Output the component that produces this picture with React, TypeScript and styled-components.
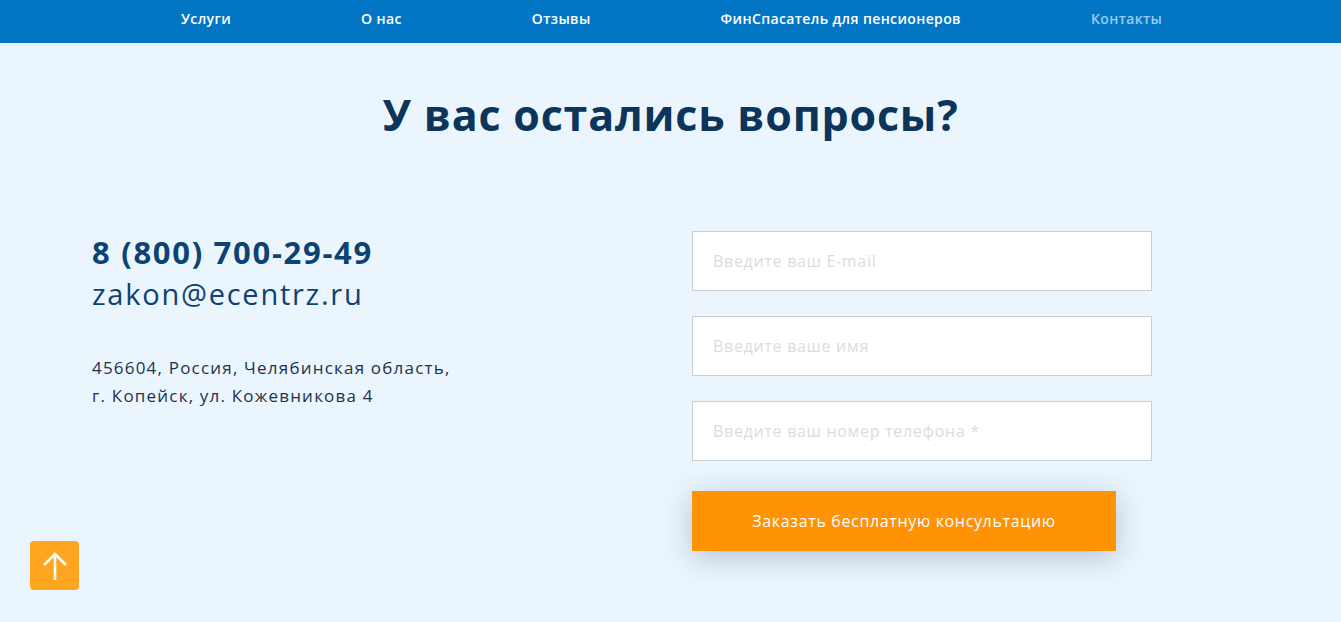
import React from "react";
import styled, { createGlobalStyle } from "styled-components";

const Global = createGlobalStyle`
  html, body { margin: 0; padding: 0; }
  body {
    background: #eaf5fe;
    font-family: "Open Sans", "Noto Sans", sans-serif;
    min-height: 622px;
  }
  * { box-sizing: border-box; }
`;

const Nav = styled.nav`
  height: 43px;
  background: #0276c5;
  display: flex;
  align-items: center;
  padding-left: 181px;
  gap: 130px;
`;

const NavLink = styled.a<{ $active?: boolean }>`
  font-size: 14px;
  font-weight: 600;
  color: ${(p) => (p.$active ? "#9ccbef" : "#ffffff")};
  text-decoration: none;
  margin-top: -7px;
  white-space: nowrap;
  letter-spacing: 0.38px;
`;

const Main = styled.main`
  padding-top: 42px;
`;

const Title = styled.h2`
  margin: 0;
  text-align: center;
  font-size: 43px;
  font-weight: 700;
  color: #0d3459;
  line-height: 60px;
  letter-spacing: 0.8px;
`;

const Columns = styled.section`
  width: 1157px;
  margin: 0 auto;
  padding-top: 86px;
  display: grid;
  grid-template-columns: 600px 460px;
`;

const Contacts = styled.div`
  display: flex;
  flex-direction: column;
  padding-top: 1px;
`;

const Phone = styled.a`
  font-size: 31px;
  font-weight: 700;
  color: #0c4373;
  text-decoration: none;
  line-height: 40px;
  letter-spacing: 1.7px;
`;

const Email = styled.a`
  font-size: 29px;
  font-weight: 400;
  color: #0c4373;
  text-decoration: none;
  line-height: 44px;
  letter-spacing: 1.75px;
`;

const Address = styled.p`
  margin: 38px 0 0;
  font-size: 17px;
  line-height: 28px;
  color: #1f3348;
  letter-spacing: 1.2px;
`;

const Form = styled.form`
  display: flex;
  flex-direction: column;
  gap: 25px;
`;

const Input = styled.input`
  width: 460px;
  height: 60px;
  border: 1px solid #c9ced3;
  background: #ffffff;
  padding: 0 20px;
  font-family: inherit;
  font-size: 16px;
  letter-spacing: 0.7px;
  outline: none;
  &::placeholder { color: #dcdcdc; }
`;

const Submit = styled.button`
  margin-top: 5px;
  width: 424px;
  height: 60px;
  border: none;
  background: #ff9205;
  color: #ffffff;
  font-family: inherit;
  font-size: 16px;
  font-weight: 500;
  letter-spacing: 0.65px;
  box-shadow: 0 6px 30px rgba(40, 70, 100, 0.28);
  cursor: pointer;
`;

const ScrollUp = styled.button`
  position: fixed;
  left: 30px;
  top: 541px;
  width: 49px;
  height: 49px;
  border: none;
  border-radius: 4px;
  background: #ffa51f;
  display: flex;
  align-items: center;
  justify-content: center;
  padding: 0;
`;

export default function App() {
  return (
    <>
      <Global />
      <Nav>
        <NavLink href="#">Услуги</NavLink>
        <NavLink href="#">О нас</NavLink>
        <NavLink href="#">Отзывы</NavLink>
        <NavLink href="#">ФинСпасатель для пенсионеров</NavLink>
        <NavLink href="#" $active>Контакты</NavLink>
      </Nav>
      <Main>
        <Title>У вас остались вопросы?</Title>
        <Columns>
          <Contacts>
            <Phone href="#">8 (800) 700-29-49</Phone>
            <Email href="#">zakon@ecentrz.ru</Email>
            <Address>
              456604, Россия, Челябинская область,
              <br />
              г. Копейск, ул. Кожевникова 4
            </Address>
          </Contacts>
          <Form onSubmit={(e) => e.preventDefault()}>
            <Input placeholder="Введите ваш E-mail" />
            <Input placeholder="Введите ваше имя" />
            <Input placeholder="Введите ваш номер телефона *" />
            <Submit type="submit">Заказать бесплатную консультацию</Submit>
          </Form>
        </Columns>
      </Main>
      <ScrollUp aria-label="Наверх">
        <svg width="26" height="30" viewBox="0 0 26 30" fill="none" stroke="#ffffff" strokeWidth="2.6">
          <path d="M13 29V3" />
          <path d="M2 14L13 3L24 14" />
        </svg>
      </ScrollUp>
    </>
  );
}
